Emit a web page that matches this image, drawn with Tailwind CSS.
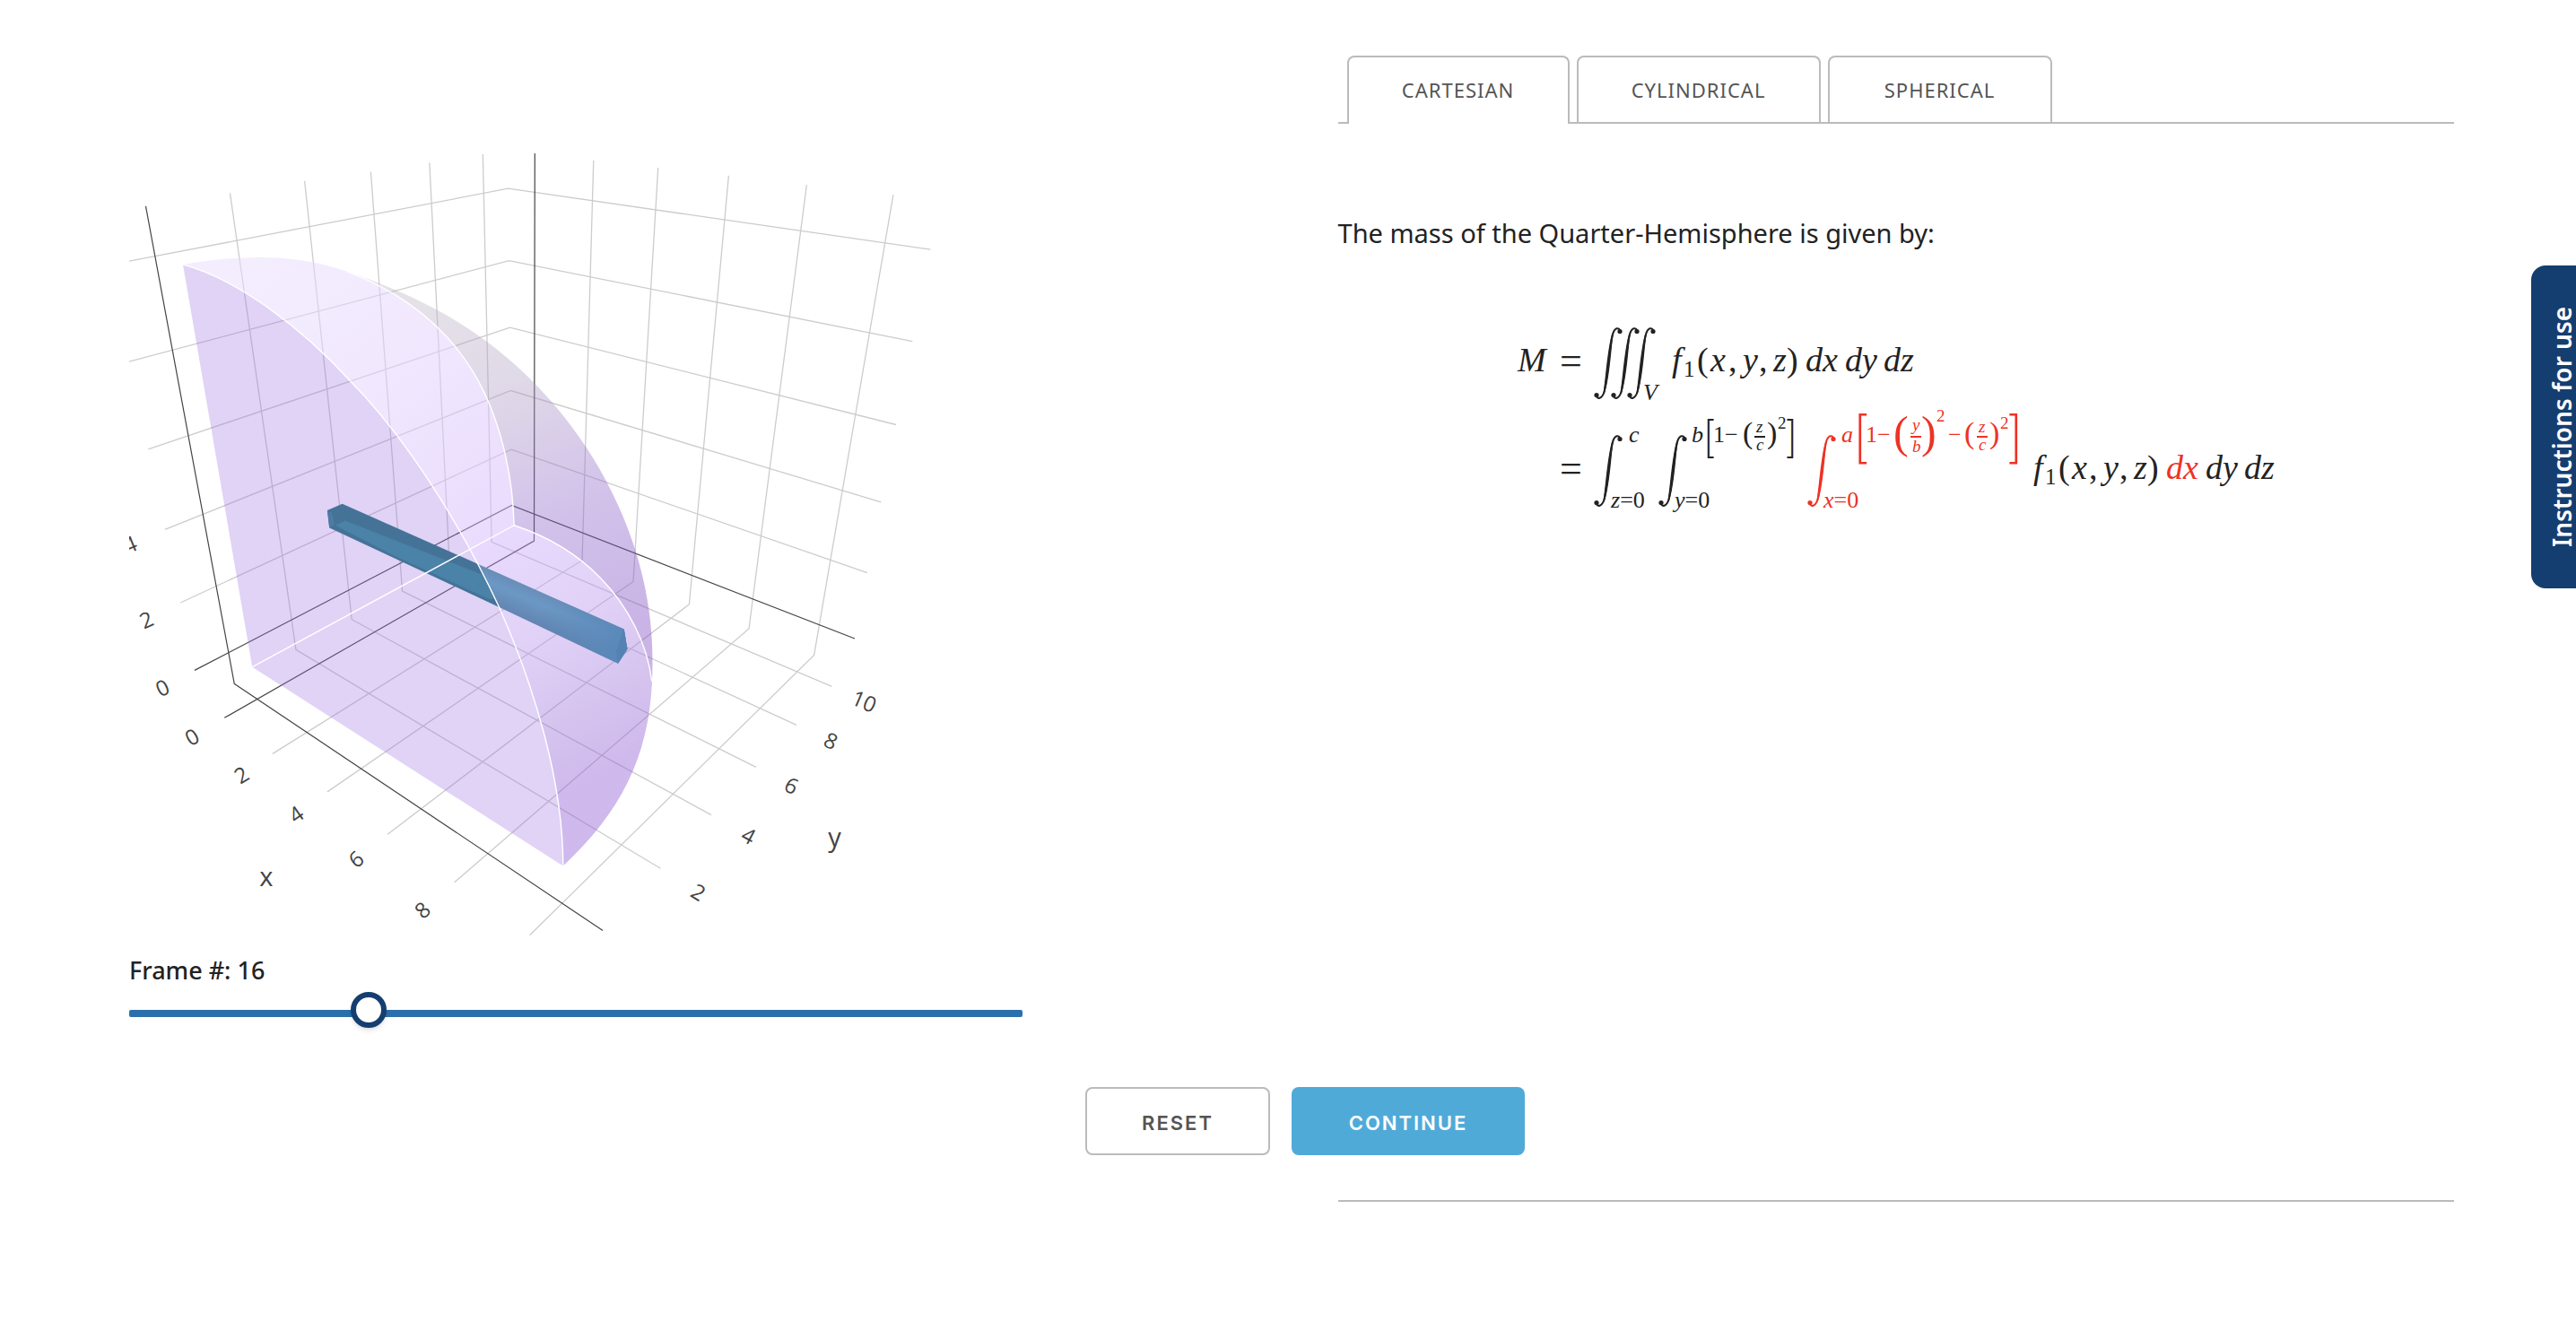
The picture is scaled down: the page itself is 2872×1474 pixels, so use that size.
<!DOCTYPE html>
<html lang="en">
<head>
<meta charset="utf-8">
<title>Mass of the Quarter-Hemisphere</title>
<script src="https://cdn.jsdelivr.net/npm/@tailwindcss/browser@4"></script>
</head>
<body class="bg-white text-[#222] font-['Noto_Sans',sans-serif]">
<main class="grid grid-cols-[4fr_5fr] gap-x-[352px] pl-36 pr-[136px] pt-11">

  <section>
    <svg class="w-full h-auto" viewBox="144 44 996 1000" role="img" aria-label="Quarter-hemisphere with a bar along the x direction">
      <defs>
        <linearGradient id="inner" gradientUnits="userSpaceOnUse" x1="300" y1="290" x2="560" y2="640">
          <stop offset="0" stop-color="#e9dbfd"/><stop offset=".45" stop-color="#e2cffd"/><stop offset="1" stop-color="#d1b4fb"/>
        </linearGradient>
        <linearGradient id="outer" gradientUnits="userSpaceOnUse" x1="480" y1="340" x2="640" y2="720">
          <stop offset="0" stop-color="#bdb4c6"/><stop offset=".3" stop-color="#b09dc4"/><stop offset=".65" stop-color="#8e67cb"/><stop offset="1" stop-color="#7a45c0"/>
        </linearGradient>
        <linearGradient id="floor" gradientUnits="userSpaceOnUse" x1="560" y1="600" x2="700" y2="850">
          <stop offset="0" stop-color="#c7a5fb"/><stop offset=".4" stop-color="#b792ec"/><stop offset=".75" stop-color="#9b70d7"/><stop offset="1" stop-color="#8c58d3"/>
        </linearGradient>
        <linearGradient id="barLit" gradientUnits="userSpaceOnUse" x1="627" y1="664" x2="611" y2="702">
          <stop offset="0" stop-color="#6789b2"/><stop offset=".45" stop-color="#6c98c5"/><stop offset="1" stop-color="#6384b0"/>
        </linearGradient>
        <linearGradient id="barEnd" gradientUnits="userSpaceOnUse" x1="600" y1="690" x2="690" y2="725">
          <stop offset="0" stop-color="#5a8abb" stop-opacity="0"/><stop offset="1" stop-color="#5a88b9"/>
        </linearGradient>
      </defs>

      <!-- grid -->
      <g fill="none" stroke="#ccc" stroke-width="1.3">
        <path d="M256.500 215.500L330 724.700L736.700 968.700M339.700 202L392.300 691L793.300 909M413.500 191.500L448.700 659.300L843.300 855.700M479 181.500L501.400 631L888.300 808.700M538.500 172L548.300 604.700L927.700 765.700"/>
        <path d="M144 291.300L566.700 210.300L1037.700 278.300M144 403.300L567.700 290.700L1017.700 380.700M165.300 501L568.700 365.300L999.300 473.700M184 590.700L569.700 435.700L982.700 560M201.300 672.300L570.300 501.300L967.300 639"/>
        <path d="M662 179L649.300 625L304 840.700M734 187L706.300 648.700L365 883.300M812.700 196L768.700 674L432.300 930.700M899.700 206.300L835.300 701.300L506.700 984.300M996.300 217.300L908 730.700L590.700 1043.300"/>
      </g>
      <!-- axes and zero lines -->
      <g fill="none" stroke="#444" stroke-width="1.2">
        <path d="M162.500 230L261.300 762.700L672.300 1038M217 747.700L570.700 563.700L953.300 712.300M596.500 171L595.700 603.300L250.300 800.700"/>
      </g>

      <!-- outer surface behind the x = 0 face -->
      <path fill="url(#outer)" fill-opacity=".4" d="M386.700 302.700C440 321 495 345 542.700 381C606 428 658 493 690 565C714 618 727.700 677 727.700 735L727 760C722 718 701 677 670 645C645 619 613 599 573.300 586C572 530 558 464 526.700 413.300C495 362 446 325 386.700 302.700Z"/>
      <!-- x = 0 face -->
      <path fill="url(#inner)" fill-opacity=".5" d="M204 295C232 290 262 287 293 287C320 287 354 291 386.700 302.700C446 325 495 362 526.700 413.300C558 464 572 530 573.300 586L524.200 612.900C484.800 540.600 437.200 472 390.300 424.700C337 366 266 312 204 295Z"/>
      <!-- base and the outer surface seen through it -->
      <path fill="url(#floor)" fill-opacity=".42" d="M573.300 586C613 599 645 619 670 645C701 677 722 718 727 760L727.700 735C729 832 699 900 628 966C628 872 596 766 556.700 677.300C546.700 655.800 535.800 634.200 524.200 612.900Z"/>
      <!-- y = 0 face -->
      <path fill="#986ce1" fill-opacity=".3" d="M204 295C266 312 337 366 390.300 424.700C451 486 513 583 556.700 677.300C596 766 628 872 628 966L281.300 744Z"/>

      <!-- bar -->
      <path fill="#457398" d="M365 569.300L381.700 562L533.300 629.300L556.700 677.300L367.300 588.700Z"/>
      <path fill="#4b82a7" d="M374 586L385 580.700L538 641L552 668L545 668L440 620Z"/>
      <path fill="#4d7ba3" d="M365 569.300L370 572L373 585L367.300 588.700Z"/>
      <path fill="url(#barLit)" d="M533.300 629.300L696 701.700L699.700 724L689.300 740L556.700 677.300Z"/>
      <path fill="url(#barEnd)" d="M575 647.900L696 701.700L699.700 724L689.300 740L575 686Z"/>
      <path fill="#5482b2" d="M696 702L699.700 724L689.300 740L687 726Z"/>

      <!-- edges -->
      <g fill="none" stroke="#fff" stroke-width="1.4" stroke-linejoin="round">
        <path d="M204 295C266 312 337 366 390.300 424.700C451 486 513 583 556.700 677.300C596 766 628 872 628 966"/>
        <path d="M386.700 302.700C446 325 495 362 526.700 413.300C558 464 572 530 573.300 586"/>
        <path d="M281.300 744L573.300 586C613 599 645 619 670 645C701 677 722 718 727 760"/>
      </g>

      <!-- tick labels -->
      <g class="font-['Open_Sans',sans-serif] text-[24px] font-medium" fill="#444" text-anchor="middle">
        <text transform="translate(145 607) rotate(-22)" y="9">4</text>
        <text transform="translate(163 691) rotate(-24)" y="9">2</text>
        <text transform="translate(181 767) rotate(-26)" y="9">0</text>
        <text transform="translate(214 822) rotate(-30)" y="9">0</text>
        <text transform="translate(269 864) rotate(-32)" y="9">2</text>
        <text transform="translate(330 908) rotate(-35)" y="9">4</text>
        <text transform="translate(397 958) rotate(-37)" y="9">6</text>
        <text transform="translate(471 1015) rotate(-41)" y="9">8</text>
        <text transform="translate(779 995) rotate(31)" y="9">2</text>
        <text transform="translate(835 932) rotate(28)" y="9">4</text>
        <text transform="translate(883 876) rotate(26)" y="9">6</text>
        <text transform="translate(927 826) rotate(25)" y="9">8</text>
        <text transform="translate(964 782) rotate(23)" y="9">10</text>
      </g>
      <g class="font-['Open_Sans',sans-serif] text-[29px] font-medium" fill="#444" text-anchor="middle">
        <text x="297" y="988">x</text>
        <text x="931" y="944">y</text>
      </g>
    </svg>

    <label for="frame" class="block mt-4 h-[46px] text-[27px] leading-[44px] font-medium">Frame #: 16</label>
    <input id="frame" type="range" min="0" max="62" value="16" class="block w-full h-10 appearance-none bg-transparent [&::-webkit-slider-runnable-track]:h-2 [&::-webkit-slider-runnable-track]:rounded-xs [&::-webkit-slider-runnable-track]:bg-[#2c6fad] [&::-webkit-slider-runnable-track]:mt-2 [&::-webkit-slider-thumb]:appearance-none [&::-webkit-slider-thumb]:size-10 [&::-webkit-slider-thumb]:-mt-5 [&::-webkit-slider-thumb]:rounded-full [&::-webkit-slider-thumb]:border-6 [&::-webkit-slider-thumb]:border-[#153e70] [&::-webkit-slider-thumb]:bg-white [&::-webkit-slider-thumb]:shadow-md">
  </section>

  <section class="pt-[18px]">
    <div role="tablist" class="flex gap-2 pl-[10px] border-b-2 border-[#bbb] text-[22px] tracking-[1px] text-[#555]">
      <button role="tab" aria-selected="true" class="w-[248px] h-[76px] -mb-[2px] pb-[2px] bg-white border-2 border-b-0 border-[#bbb] rounded-t-lg">CARTESIAN</button>
      <button role="tab" aria-selected="false" class="w-[272px] h-[74px] border-2 border-b-0 border-[#bbb] rounded-t-lg">CYLINDRICAL</button>
      <button role="tab" aria-selected="false" class="w-[250px] h-[74px] border-2 border-b-0 border-[#bbb] rounded-t-lg">SPHERICAL</button>
    </div>

    <p class="mt-[100px] text-[29px] leading-[44px]">The mass of the Quarter-Hemisphere is given by:</p>

    <svg class="mx-auto mt-[68px] w-[860px] h-[230px] font-['Liberation_Serif',serif] text-[38px] italic" viewBox="1684 350 860 230" fill="#222">
      <defs>
        <!-- tall slanted integral sign, 32 by 80 -->
        <g id="integral">
          <path fill="none" stroke="currentColor" stroke-width="2" d="M2.500 76C4 80.500 9 80 11.500 72C15 59 17.500 21 21 8C23 0 28 -.5 29.500 4"/>
          <path fill="currentColor" stroke="currentColor" stroke-width="1.500" d="M11 74C13.500 62 15.500 24 21 7C18.500 20 17.500 56 11 74Z"/>
          <circle cx="3" cy="75.500" r="2.600" fill="currentColor"/>
          <circle cx="29" cy="4.500" r="2.600" fill="currentColor"/>
        </g>
      </defs>

      <!-- first line -->
      <text x="1692" y="414">M</text>
      <text class="not-italic text-[44px]" x="1739" y="417">=</text>
      <g class="text-[#222]">
        <use href="#integral" x="1777" y="365"/><use href="#integral" x="1796" y="365"/><use href="#integral" x="1814" y="365"/>
      </g>
      <text class="text-[26px]" x="1832" y="446">V</text>
      <text x="1864" y="414">f</text>
      <text class="not-italic text-[25px]" x="1877" y="420">1</text>
      <text class="not-italic" x="1892" y="414">(</text>
      <text x="1907" y="414">x</text><text class="not-italic" x="1927" y="414">,</text>
      <text x="1943" y="414">y</text><text class="not-italic" x="1961" y="414">,</text>
      <text x="1977" y="414">z</text>
      <text class="not-italic" x="1992" y="414">)</text>
      <text x="2013" y="414">dx</text><text x="2057" y="414">dy</text><text x="2100" y="414">dz</text>

      <!-- second line -->
      <text class="not-italic text-[44px]" x="1739" y="537">=</text>
      <g class="text-[#222]">
        <use href="#integral" x="1777" y="485"/><use href="#integral" x="1849" y="485"/>
      </g>
      <text class="text-[26px]" x="1816" y="493">c</text>
      <text class="text-[26px]" x="1796" y="566">z<tspan class="not-italic">=0</tspan></text>
      <text class="text-[26px]" x="1867" y="566">y<tspan class="not-italic">=0</tspan></text>
      <text class="text-[26px]" x="1886" y="493">b</text>
      <text class="not-italic text-[48px] font-extralight font-[Inter,sans-serif]" x="1898" y="504">[</text>
      <text class="not-italic text-[26px]" x="1910" y="493">1−</text>
      <text class="not-italic text-[34px]" x="1943" y="494">(</text>
      <text class="text-[19px]" x="1958" y="482">z</text><path d="M1956 486h12v2h-12z"/><text class="text-[19px]" x="1958" y="502">c</text>
      <text class="not-italic text-[34px]" x="1970" y="494">)</text>
      <text class="not-italic text-[19px]" x="1982" y="478">2</text>
      <text class="not-italic text-[48px] font-extralight font-[Inter,sans-serif]" x="1989" y="504">]</text>

      <g class="text-[#ee3224]" fill="currentColor">
        <use href="#integral" x="2015" y="485"/>
        <g class="text-[26px]"><text x="2033" y="566">x<tspan class="not-italic">=0</tspan></text><text x="2053" y="493">a</text></g>
        <text class="not-italic text-[62px] font-extralight font-[Inter,sans-serif]" x="2065" y="509">[</text>
        <text class="not-italic text-[26px]" x="2080" y="493">1−</text>
        <text class="not-italic text-[50px]" x="2111" y="499">(</text>
        <text class="text-[19px]" x="2132" y="480">y</text><path d="M2130 486h12v2h-12z"/><text class="text-[19px]" x="2132" y="504">b</text>
        <text class="not-italic text-[50px]" x="2142" y="499">)</text>
        <text class="not-italic text-[19px]" x="2159" y="470">2</text>
        <text class="not-italic text-[26px]" x="2172" y="493">−</text>
        <text class="not-italic text-[34px]" x="2190" y="494">(</text>
        <text class="text-[19px]" x="2206" y="482">z</text><path d="M2204 486h12v2h-12z"/><text class="text-[19px]" x="2206" y="502">c</text>
        <text class="not-italic text-[34px]" x="2218" y="494">)</text>
        <text class="not-italic text-[19px]" x="2230" y="478">2</text>
        <text class="not-italic text-[62px] font-extralight font-[Inter,sans-serif]" x="2236" y="509">]</text>
        <text x="2415" y="534">dx</text>
      </g>
      <text x="2267" y="534">f</text>
      <text class="not-italic text-[25px]" x="2280" y="540">1</text>
      <text class="not-italic" x="2295" y="534">(</text>
      <text x="2310" y="534">x</text><text class="not-italic" x="2329" y="534">,</text>
      <text x="2345" y="534">y</text><text class="not-italic" x="2363" y="534">,</text>
      <text x="2379" y="534">z</text>
      <text class="not-italic" x="2394" y="534">)</text>
      <text x="2459" y="534">dy</text><text x="2502" y="534">dz</text>
    </svg>
  </section>

  <div class="col-span-2 flex justify-center gap-6 mt-[66px] pl-[30px] font-[Inter,sans-serif] text-[22px] font-semibold tracking-[2px]">
    <button class="w-[206px] h-[76px] pt-1.5 rounded-lg border-2 border-[#bbb] bg-white text-[#555]">RESET</button>
    <button class="w-[260px] h-[76px] pt-1.5 rounded-lg bg-[#50aad8] text-white">CONTINUE</button>
  </div>

  <hr class="col-start-2 mt-[50px] border-t-2 border-[#bbb]">
</main>

<button class="absolute right-0 top-[296px] w-[50px] h-[360px] rounded-l-2xl bg-[#153e70] text-white"><span class="block rotate-180 [writing-mode:vertical-rl] w-[50px] h-[360px] pr-[18px] leading-[32px] text-[28px] font-semibold">Instructions for use</span></button>
</body>
</html>
